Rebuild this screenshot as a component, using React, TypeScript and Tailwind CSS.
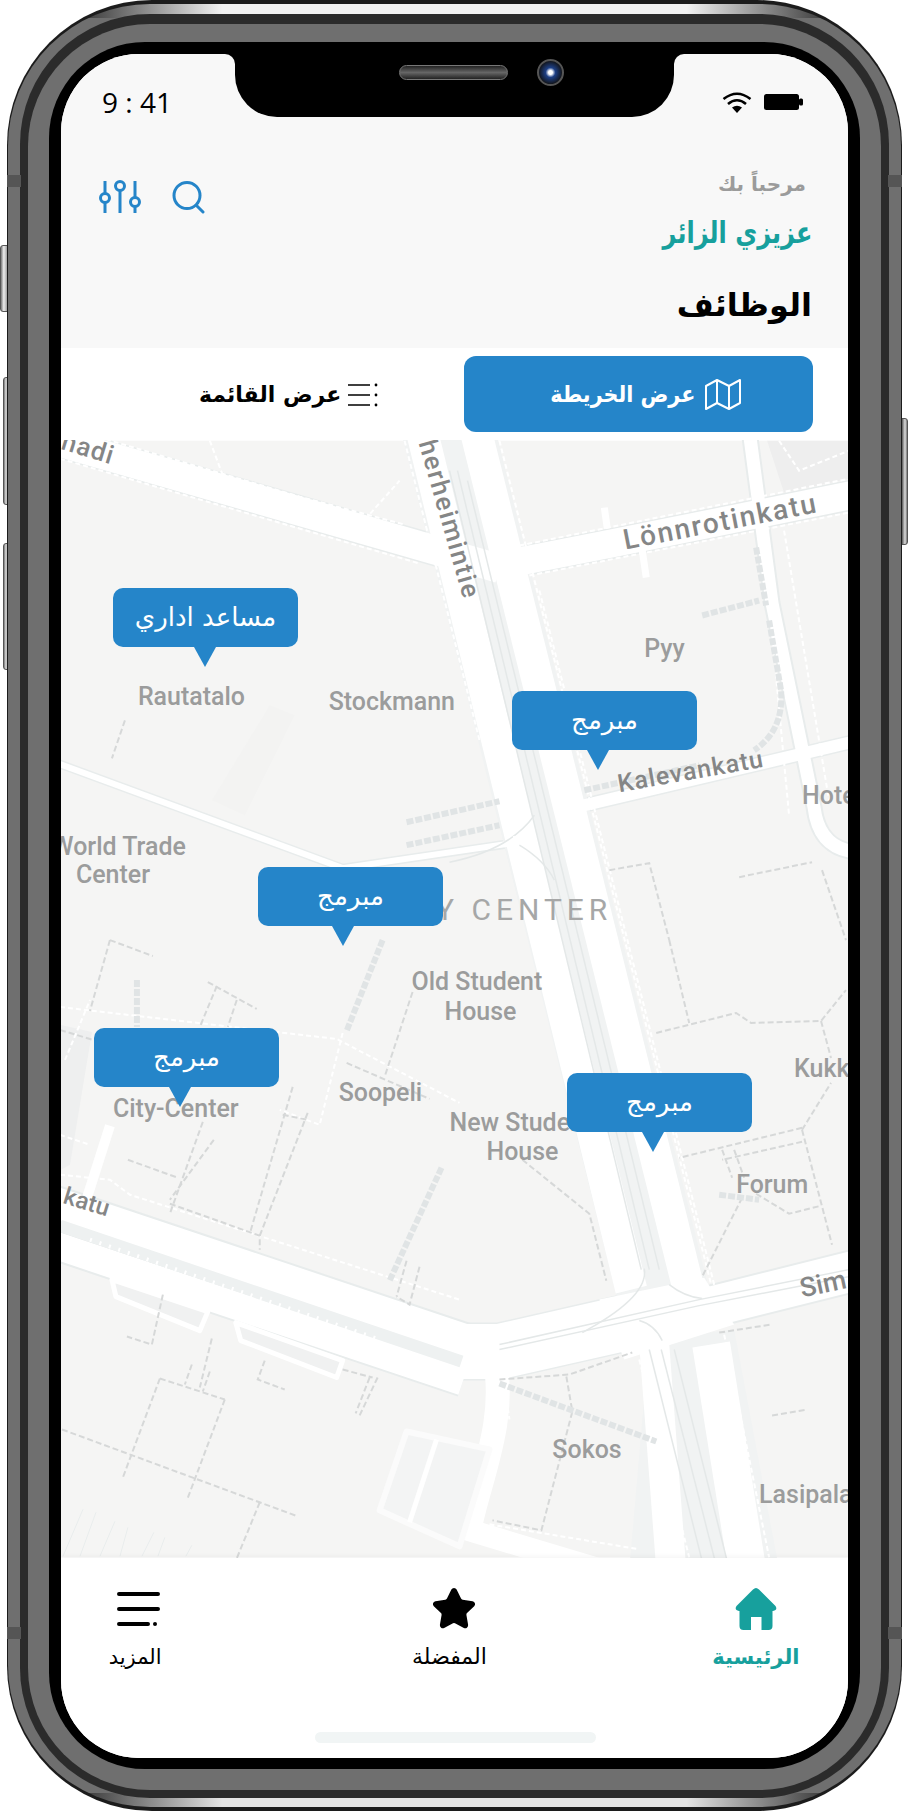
import { Star } from "lucide-react";

const BLUE = "#2585c9";

const edgeRoads = [
  { d: "M40 436 L500 568", w: 32 },
  { d: "M500 565 L617 542 L860 493", w: 31 },
  { d: "M750 430 L773 603 L815 807 Q820 850 860 852", w: 17 },
  { d: "M585 805 L860 740", w: 15 },
  { d: "M55 762 L343 868 L520 842", w: 9 },
  { d: "M40 1218 L470 1362", w: 74 },
  { d: "M450 1352 L500 1352 L650 1318", w: 58 },
  { d: "M640 1325 L860 1270", w: 44 },
];

const whiteRoads = [
  { d: "M40 436 L500 568", w: 29 },
  { d: "M500 565 L617 542 L860 493", w: 28 },
  { d: "M750 430 L773 603 L815 807 Q820 850 860 852", w: 13 },
  { d: "M585 805 L860 740", w: 12 },
  { d: "M55 762 L343 868 L520 842", w: 6 },
  { d: "M605 507 L608 528", w: 7 },
  { d: "M643 550 L647 577", w: 7 },
  { d: "M110 1126 L87 1198", w: 10 },
  { d: "M40 1218 L470 1362", w: 70 },
  { d: "M450 1352 L500 1352 L650 1318", w: 55 },
  { d: "M640 1325 L860 1270", w: 40 },
  { d: "M495 1360 C508 1420 480 1480 470 1530", w: 24 },
  { d: "M440 1522 L600 1570", w: 22 },
];

const grayDashes = [
  "M110 940 L90 1011",
  "M110 940 L153 956",
  "M208 982 L257 1009",
  "M217 986 L200 1027",
  "M237 1000 L228 1027",
  "M203 1122 L170 1214",
  "M128 1160 L178 1178",
  "M170 1204 L260 1236 L260 1250",
  "M308 1113 L260 1236",
  "M293 1087 L250 1234",
  "M283 1115 L308 1120",
  "M413 992 L385 1077",
  "M347 1063 L430 1099",
  "M163 1295 L152 1345 L127 1337",
  "M212 1339 L200 1388",
  "M192 1365 L185 1385",
  "M210 1372 L203 1392",
  "M160 1379 L225 1400",
  "M160 1379 L123 1478",
  "M225 1400 L187 1501",
  "M62 1430 L298 1517",
  "M260 1503 L237 1559",
  "M265 1361 L258 1380 L285 1390",
  "M343 1370 L373 1378",
  "M378 1378 L360 1416",
  "M370 1378 L356 1414",
  "M407 1261 L397 1297",
  "M420 1267 L410 1305 L397 1297",
  "M670 940 L690 1023",
  "M657 1033 L737 1013 L752 1023 L822 1021 L847 990",
  "M822 1021 L832 1058",
  "M803 1128 L680 1158",
  "M803 1142 L723 1160",
  "M723 1150 L733 1178",
  "M735 1150 L745 1178",
  "M803 1130 L833 1245",
  "M803 1130 L832 1083",
  "M743 1198 L703 1277",
  "M757 1194 L790 1214 L822 1206",
  "M523 1160 L590 1214 L607 1281",
  "M500 1380 L570 1375 L633 1353",
  "M567 1377 L573 1412 L542 1531 L493 1521",
  "M773 1416 L808 1410",
  "M720 1333 L772 1325",
  "M125 720 L112 758",
  "M610 870 L650 863 L670 940",
  "M740 877 L813 862",
  "M823 870 L847 940",
  "M60 1030 L160 1060 L200 1065",
  "M214 1140 L170 1200",
];

const whiteDashes = [
  "M60 425 L300 496 L405 524",
  "M60 458 L420 563",
  "M520 545 L850 478",
  "M530 575 L850 512",
  "M405 440 L480 740",
  "M500 440 L712 1285",
  "M478 680 L620 1290",
  "M540 590 L715 1285",
  "M60 1007 L337 1039 L460 1103",
  "M343 1033 L320 1125 L280 1110",
  "M65 1060 L90 1000",
  "M60 1135 L90 1145",
  "M60 1175 L110 1180 L130 1195 L460 1300",
  "M755 442 L790 815",
  "M785 530 L830 800",
  "M725 1335 L770 1558",
  "M505 1385 L510 1420",
  "M640 1360 L690 1558",
  "M490 1525 L640 1550",
  "M780 440 L800 470 L850 450",
  "M360 525 L400 480",
  "M210 440 L225 480",
];

const thickDashes = [
  "M442 1168 L390 1281",
  "M383 940 L347 1031",
  "M137 980 L137 1027",
  "M703 615 L760 600",
  "M757 547 L767 605",
  "M770 620 L782 690 Q785 730 755 750",
  "M407 822 L500 801",
  "M407 845 L500 825",
  "M500 1384 L657 1442",
  "M585 790 L700 765",
  "M720 1195 L760 1200",
];

const railLines = [
  "M450 470 L642 1270",
  "M458 470 L650 1270",
  "M468 480 L660 1270",
  "M650 1350 L705 1570",
  "M662 1350 L718 1570",
  "M675 1350 L730 1570",
  "M60 1222 L460 1358",
  "M60 1232 L450 1362",
  "M500 1345 L700 1300 L860 1268",
  "M500 1350 L700 1306 L860 1275",
  "M645 1269 Q650 1297 583 1333",
  "M670 1285 Q685 1297 703 1299",
  "M640 1321 Q655 1325 663 1341",
  "M450 862 Q510 850 535 815",
  "M520 845 Q545 860 555 880",
];

const hatchLines = [
  "M63 1557 L83 1510",
  "M80 1557 L96 1513",
  "M100 1557 L115 1522",
  "M120 1557 L128 1528",
  "M142 1557 L154 1533",
  "M158 1557 L165 1538",
  "M186 1557 L192 1546",
];

const latinFont = "font-['Roboto',sans-serif]";

const labels = [
  { text: "nadi", x: 60, y: 448, size: 26, rot: "rotate(17 60 448)", dark: true, track: 1 },
  { text: "herheimintie", x: 419, y: 442, size: 26, rot: "rotate(74 419 442)", dark: true, track: 1.6 },
  { text: "Lönnrotinkatu", x: 626, y: 549, size: 28, rot: "rotate(-11 626 549)", dark: true, track: 1.8 },
  { text: "Kalevankatu", x: 620, y: 792, size: 25, rot: "rotate(-10 620 792)", dark: true, track: 1 },
  { text: "Sim", x: 803, y: 1298, size: 27, rot: "rotate(-12 803 1298)", dark: true },
  { text: "katu", x: 62, y: 1203, size: 24, rot: "rotate(17 62 1203)", dark: true },
  { text: "Pyy", x: 645, y: 657, size: 25 },
  { text: "Rautatalo", x: 138, y: 705, size: 25 },
  { text: "Stockmann", x: 329, y: 710, size: 25 },
  { text: "Hotel", x: 803, y: 804, size: 25 },
  { text: "Center", x: 76, y: 883, size: 25 },
  { text: "Old Student", x: 412, y: 990, size: 25 },
  { text: "House", x: 445, y: 1020, size: 25 },
  { text: "New Student", x: 450, y: 1131, size: 25 },
  { text: "House", x: 487, y: 1160, size: 25 },
  { text: "Soopeli", x: 339, y: 1101, size: 25 },
  { text: "City-Center", x: 113, y: 1117, size: 25 },
  { text: "Kukkia", x: 795, y: 1077, size: 25 },
  { text: "Forum", x: 737, y: 1193, size: 25 },
  { text: "Sokos", x: 553, y: 1459, size: 25 },
  { text: "Lasipalatsi", x: 760, y: 1504, size: 25 },
];

const pins = [
  { label: "مساعد اداري", pos: "left-[52px] top-[148px]", tip: "ml-[81px]" },
  { label: "مبرمج", pos: "left-[451px] top-[251px]", tip: "ml-[75px]" },
  { label: "مبرمج", pos: "left-[197px] top-[427px]", tip: "ml-[74px]" },
  { label: "مبرمج", pos: "left-[33px] top-[588px]", tip: "ml-[75px]" },
  { label: "مبرمج", pos: "left-[506px] top-[633px]", tip: "ml-[75px]" },
];

const arabicFont = "font-['DejaVu_Sans',sans-serif]";

function MapDrawing() {
  return (
    <svg className="absolute inset-0 h-full w-full" viewBox="61 440 788 1118" fill="none">
      <rect x="61" y="440" width="788" height="1118" fill="#f5f5f4" />
      <path d="M61 1025 L92 1032 L70 1165 L61 1170 Z" fill="#eeefef" />
      <path d="M768 440 L850 440 L850 478 L785 492 Z" fill="#eeeeee" />
      <path d="M270 705 L295 715 L245 815 L212 800 Z" fill="#f3f3f2" />

      {edgeRoads.map((r) => (
        <path key={r.d} d={r.d} stroke="#e8ecec" strokeWidth={r.w} />
      ))}

      {/* mannerheimintie corridor */}
      <path d="M400 425 L618 1300 L710 1290 L495 425 Z" fill="#f1f3f3" />
      <path d="M650 1340 L630 1570 L780 1570 L735 1330 Z" fill="#f1f3f3" />
      {whiteRoads.map((r) => (
        <path key={r.d} d={r.d} stroke="#ffffff" strokeWidth={r.w} />
      ))}
      <path d="M421 425 L632 1290" stroke="#ffffff" strokeWidth={32} />
      <path d="M475 425 L692 1300" stroke="#ffffff" strokeWidth={32} />
      <path d="M655 1345 L672 1570" stroke="#ffffff" strokeWidth={30} />
      <path d="M712 1345 L748 1570" stroke="#ffffff" strokeWidth={38} />
      <path d="M600 1300 L705 1278 L735 1325 L625 1360 Z" fill="#ffffff" />

      {railLines.map((d) => (
        <path key={d} d={d} stroke="#e4e8e8" strokeWidth={1.5} />
      ))}
      <path d="M60 1226 L462 1362" stroke="#eef1f1" strokeWidth={12} />
      <path d="M120 1234 L450 1345" stroke="#ffffff" strokeWidth={4} strokeDasharray="6 5" />
      <path d="M90 1240 L380 1340" stroke="#ffffff" strokeWidth={4} strokeDasharray="2 8" />

      <path d="M112 1280 L116 1297 L200 1331 L208 1312 Z" fill="#f0f1f1" stroke="#ffffff" strokeWidth={5} strokeLinejoin="round" />
      <path d="M236 1323 L241 1341 L337 1378 L343 1361 Z" fill="#f0f1f1" stroke="#ffffff" strokeWidth={5} strokeLinejoin="round" />
      <path d="M407 1432 L380 1511 L460 1547 L490 1450 Z" fill="#f3f4f4" stroke="#fbfbfb" strokeWidth={6} strokeLinejoin="round" />
      <path d="M437 1440 L410 1523" stroke="#ffffff" strokeWidth={5} />

      {whiteDashes.map((d) => (
        <path key={d} d={d} stroke="#ffffff" strokeWidth={2} strokeDasharray="5 3" />
      ))}
      {grayDashes.map((d) => (
        <path key={d} d={d} stroke="#d6d8d8" strokeWidth={2} strokeDasharray="6 3" />
      ))}
      {thickDashes.map((d) => (
        <path key={d} d={d} stroke="#e0e4e5" strokeWidth={6} strokeDasharray="7 2" />
      ))}
      {hatchLines.map((d) => (
        <path key={d} d={d} stroke="#e9eded" strokeWidth={1} />
      ))}

      {labels.map((l) => (
        <text
          key={l.text + l.x}
          x={l.x}
          y={l.y}
          fontSize={l.size}
          letterSpacing={l.track}
          transform={l.rot}
          fill={l.dark ? "#858686" : "#9b9c9c"}
          className={`${latinFont} font-medium`}
        >
          {l.text}
        </text>
      ))}
      <text x="186" y="855" fontSize="25" textAnchor="end" fill="#9b9c9c" className={`${latinFont} font-medium`}>
        World Trade
      </text>
      <text x="613" y="920" fontSize="30" letterSpacing="5" textAnchor="end" fill="#a6a7a7" className={latinFont}>
        CITY CENTER
      </text>
    </svg>
  );
}

function MapPin({ label, pos, tip }: { label: string; pos: string; tip: string }) {
  return (
    <div className={`absolute ${pos} flex flex-col`}>
      <div
        dir="rtl"
        className={`flex h-[59px] w-[185px] items-center justify-center rounded-[10px] bg-[#2585c9] text-[26px] text-white ${arabicFont}`}
      >
        {label}
      </div>
      <div className={`h-0 w-0 border-x-[11px] border-t-[20px] border-x-transparent border-t-[#2585c9] ${tip}`} />
    </div>
  );
}

function FilterIcon() {
  return (
    <svg width="43" height="34" viewBox="0 0 43 34" fill="none" stroke={BLUE} strokeWidth="3">
      <path d="M6 1 V14 M6 23 V33 M21 10 V33 M36 1 V18 M36 27 V33" />
      <circle cx="6" cy="18" r="4.5" />
      <circle cx="21" cy="6" r="4.5" />
      <circle cx="36" cy="22" r="4.5" />
    </svg>
  );
}

function SearchIcon() {
  return (
    <svg width="33" height="33" viewBox="0 0 33 33" fill="none" stroke={BLUE} strokeWidth="3" strokeLinecap="round">
      <circle cx="15" cy="14.5" r="13" />
      <path d="M25 25 L31 31" />
    </svg>
  );
}

function WifiIcon() {
  return (
    <svg width="30" height="21" viewBox="0 0 30 21" fill="none" stroke="#000" strokeWidth="2.6">
      <path d="M1.5 7 Q15 -3.5 28.5 7" />
      <path d="M6 12 Q15 4.5 24 12" />
      <path d="M15 21 L10 15.5 Q15 12 20 15.5 Z" fill="#000" stroke="none" />
    </svg>
  );
}

function BatteryIcon() {
  return (
    <svg width="39" height="16" viewBox="0 0 39 16" fill="#000">
      <rect x="0" y="0" width="35" height="16" rx="2.5" />
      <rect x="35" y="4.5" width="4" height="7" rx="1.5" />
    </svg>
  );
}

function MapIcon() {
  return (
    <svg width="36" height="33" viewBox="0 0 36 33" fill="none" stroke="#fff" strokeWidth="2" strokeLinejoin="round">
      <path d="M1 8 L12 2 L24 8 L35 2 V25 L24 31 L12 25 L1 31 Z" />
      <path d="M12 2 V25 M24 8 V31" />
    </svg>
  );
}

function ListIcon() {
  return (
    <svg width="30" height="24" viewBox="0 0 30 24" fill="none" stroke="#000" strokeWidth="1.6">
      <path d="M0 2 H22 M0 12 H22 M0 22 H22" />
      <circle cx="28" cy="2" r="1.4" fill="#000" stroke="none" />
      <circle cx="28" cy="12" r="1.4" fill="#000" stroke="none" />
      <circle cx="28" cy="22" r="1.4" fill="#000" stroke="none" />
    </svg>
  );
}

function HomeIcon() {
  return (
    <svg width="42" height="42" viewBox="0 0 42 42" fill="#17a09d">
      <path d="M21 0 Q22.5 0 24 1.5 L40.5 18 Q43 22 38 23 H37.5 V38 Q37.5 42 33.5 42 H26.5 V29 H16 V42 H8.5 Q4.5 42 4.5 38 V23 H4 Q-1 22 1.5 18 L18 1.5 Q19.5 0 21 0 Z" />
    </svg>
  );
}

function MenuIcon() {
  return (
    <svg width="43" height="35" viewBox="0 0 43 35" fill="none" stroke="#000" strokeWidth="4" strokeLinecap="round">
      <path d="M2 2 H41 M2 17 H41 M2 32 H31" />
      <circle cx="38" cy="32" r="2" fill="#000" stroke="none" />
    </svg>
  );
}

function Screen() {
  return (
    <div className="relative flex h-full flex-col overflow-hidden rounded-[78px] bg-white">
      {/* notch */}
      <div className="absolute left-[174px] top-0 z-10 flex h-[63px] w-[439px] items-center justify-center rounded-b-[42px] bg-black">
        <div className="absolute -left-[10px] top-0 size-[10px] rounded-tr-[10px] shadow-[4px_-4px_0_4px_#000]" />
        <div className="absolute -right-[10px] top-0 size-[10px] rounded-tl-[10px] shadow-[-4px_-4px_0_4px_#000]" />
        <div className="mb-[27px] ml-[54px] h-[15px] w-[109px] rounded-full border border-[#777] bg-[linear-gradient(180deg,#222_0,#666_50%,#222_100%)]" />
        <div className="mb-[27px] ml-[29px] flex size-[27px] items-center justify-center rounded-full border-2 border-[#555] bg-[radial-gradient(circle,#fff_0,#fff_12%,#1d3f86_30%,#111_75%)]" />
      </div>

      <div className="flex h-[294px] flex-col bg-[#f8f8f8]">
        <div className="flex h-[96px] items-center justify-between pl-[41px] pr-[45px]">
          <span className="font-['Open_Sans',sans-serif] text-[28px] leading-none text-black">9 : 41</span>
          <div className="flex items-center gap-[12px]">
            <WifiIcon />
            <BatteryIcon />
          </div>
        </div>
        <div className="flex items-start justify-between pl-[38px] pr-[36px]">
          <div className="mt-[30px] flex items-center gap-[30px]">
            <FilterIcon />
            <SearchIcon />
          </div>
          <div dir="rtl" className={`flex flex-col items-start pt-[17px] ${arabicFont}`}>
            <span className="mr-[6px] text-[20px] font-bold leading-[34px] text-[#9b9b9b]">مرحباً بك</span>
            <span className="mt-[12px] origin-right scale-x-[0.8] text-[30px] font-bold leading-[40px] text-[#17a09d]">عزيزي الزائر</span>
            <span className="mt-[32px] text-[32px] font-bold leading-[40px] text-black">الوظائف</span>
          </div>
        </div>
      </div>

      <div className="flex h-[92px] items-start justify-between pl-[138px] pr-[35px] pt-[8px]">
        <div className={`mt-[22px] flex items-center gap-[7px] text-[22px] font-bold text-black ${arabicFont}`}>
          <span dir="rtl">عرض القائمة</span>
          <ListIcon />
        </div>
        <div className={`flex h-[76px] w-[349px] items-center justify-center gap-[10px] rounded-[12px] bg-[#2585c9] pr-[2px] text-[23px] font-bold text-white ${arabicFont}`}>
          <span dir="rtl" className="origin-right scale-x-[0.9]">عرض الخريطة</span>
          <MapIcon />
        </div>
      </div>

      <div className="relative flex-1 overflow-hidden">
        <MapDrawing />
        {pins.map((p) => (
          <MapPin key={p.pos} {...p} />
        ))}
      </div>

      <div className="relative flex h-[200px] flex-col bg-white shadow-[0_-2px_4px_rgba(0,0,0,0.04)]">
        <div className={`grid grid-cols-3 items-start pt-[29px] ${arabicFont}`}>
          <div className="flex flex-col items-center gap-[12px] pr-[107px] text-[21px] text-black">
            <div className="flex h-[44px] items-center">
              <MenuIcon />
            </div>
            <span dir="rtl" className="mr-[7px] leading-[28px]">المزيد</span>
          </div>
          <div className="flex flex-col items-center gap-[12px] text-[22px] text-black">
            <div className="flex h-[44px] items-center">
              <Star size={46} fill="#000" color="#000" strokeWidth={2} />
            </div>
            <span dir="rtl" className="mr-[10px] leading-[28px]">المفضلة</span>
          </div>
          <div className="flex flex-col items-center gap-[12px] pl-[78px] text-[21px] font-bold text-[#17a09d]">
            <div className="flex h-[44px] items-center">
              <HomeIcon />
            </div>
            <span dir="rtl" className="whitespace-nowrap leading-[28px]">الرئيسية</span>
          </div>
        </div>
        <div className="absolute bottom-[15px] left-[254px] h-[11px] w-[281px] rounded-full bg-[#f1f5f5]" />
      </div>
    </div>
  );
}

export default function App() {
  return (
    <div className="relative h-[1811px] w-[908px] overflow-hidden bg-white">
      {/* side buttons */}
      <div className="absolute left-0 top-[245px] h-[67px] w-[9px] rounded-l-[3px] border border-[#555] bg-[linear-gradient(90deg,#777,#eee_40%,#888)]" />
      <div className="absolute left-[3px] top-[377px] h-[128px] w-[7px] rounded-l-[3px] border border-[#555] bg-[linear-gradient(90deg,#777,#ddd_40%,#555)]" />
      <div className="absolute left-[3px] top-[543px] h-[127px] w-[7px] rounded-l-[3px] border border-[#555] bg-[linear-gradient(90deg,#777,#ddd_40%,#555)]" />
      <div className="absolute right-0 top-[418px] h-[127px] w-[7px] rounded-r-[3px] border border-[#555] bg-[linear-gradient(90deg,#555,#ddd_60%,#777)]" />
      <div className="absolute bottom-0 left-[400px] h-[3px] w-[110px] rounded-t-[3px] bg-[#ddd]" />

      <div className="relative ml-[7px] h-full w-[895px] rounded-[145px] bg-[#1c1c1c] px-px pb-[4px] pt-[4px]">
        <div className="h-full rounded-[142px] bg-[linear-gradient(90deg,#2a2a2a_0,#2a2a2a_7%,#f2f2f2_24%,#f2f2f2_76%,#2a2a2a_93%,#2a2a2a_100%),linear-gradient(90deg,#2a2a2a_0,#2a2a2a_7%,#e4e4e4_24%,#e4e4e4_76%,#2a2a2a_93%,#2a2a2a_100%),linear-gradient(#6f6f6f,#6f6f6f)] bg-[length:100%_14px,100%_14px,100%_100%] bg-[position:top,bottom,center] bg-no-repeat px-[12px] pb-[9px] pt-[10px]">
          <div className="h-full rounded-[130px] bg-[#2b2b2b] px-[8px] pb-[8px] pt-[10px]">
            <div className="h-full rounded-[122px] bg-[#6f6f6f] px-[21px] pb-[21px] pt-[18px]">
              <div className="h-full rounded-[96px] bg-black px-[12px] pb-[11px] pt-[12px]">
                <Screen />
              </div>
            </div>
          </div>
        </div>
        {/* antenna bands */}
        <div className="absolute left-0 top-[175px] h-[12px] w-[14px] bg-[#555]" />
        <div className="absolute right-0 top-[175px] h-[12px] w-[14px] bg-[#555]" />
        <div className="absolute bottom-[172px] left-0 h-[12px] w-[14px] bg-[#555]" />
        <div className="absolute bottom-[172px] right-0 h-[12px] w-[14px] bg-[#555]" />
      </div>
    </div>
  );
}
